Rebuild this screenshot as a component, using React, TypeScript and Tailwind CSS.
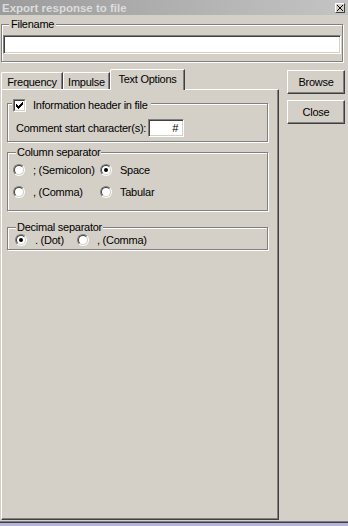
import React from 'react';

// Classic 3D radio button (12x12), sunken ring with white well.
const Radio: React.FC<{ checked?: boolean }> = ({ checked }) => (
  <span className="block w-[12px] h-[12px] shrink-0 rounded-full border border-t-[#808080] border-l-[#808080] border-r-white border-b-white">
    <span className="flex items-center justify-center w-full h-full rounded-full bg-white border border-t-[#404040] border-l-[#404040] border-r-[#d4d0c8] border-b-[#d4d0c8]">
      {checked && <span className="block w-[4px] h-[4px] rounded-full bg-black" />}
    </span>
  </span>
);

// Classic 3D checkbox (13x13) with a pixel check mark.
const CheckBox: React.FC<{ checked?: boolean }> = ({ checked }) => (
  <span className="flex w-[13px] h-[13px] shrink-0 border border-t-[#808080] border-l-[#808080] border-r-white border-b-white">
    <span className="flex flex-1 items-center justify-center bg-white border border-t-[#404040] border-l-[#404040] border-r-[#d4d0c8] border-b-[#d4d0c8]">
      {checked && (
        <svg width="7" height="7" viewBox="0 0 7 7" shapeRendering="crispEdges">
          {[2, 3, 4, 3, 2, 1, 0].map((y, x) => (
            <rect key={x} x={x} y={y} width="1" height="3" fill="#000" />
          ))}
        </svg>
      )}
    </span>
  </span>
);

const RadioOption: React.FC<{ label: string; checked?: boolean; className?: string }> = ({ label, checked, className }) => (
  <div className={`flex items-center ${className ?? ''}`}>
    <Radio checked={checked} />
    <span className="ml-[8px] whitespace-nowrap">{label}</span>
  </div>
);

const App: React.FC = () => {
  return (
    <div className="w-[348px] h-[526px] bg-[#d4d0c8] flex flex-col overflow-hidden text-black text-[11px] leading-[13px] tracking-[-0.25px] font-['Liberation_Sans',Arial,sans-serif]">
      {/* Title bar */}
      <div className="h-[15px] shrink-0 flex items-center justify-between bg-gradient-to-r from-[#9c9c9c] to-[#c4c4c4]">
        <span className="ml-[2px] pt-[1px] font-bold text-[11.5px] tracking-normal text-[#dcdcdc] whitespace-nowrap">Export response to file</span>
        <button className="mr-[3px] w-[10px] h-[10px] flex items-center justify-center bg-[#d4d0c8] border border-t-white border-l-white border-r-[#404040] border-b-[#404040]">
          <svg width="6" height="6" viewBox="0 0 6 6" shapeRendering="crispEdges">
            <path d="M0 0 L6 6 M6 0 L0 6" stroke="#000" strokeWidth="1.2" />
          </svg>
        </button>
      </div>

      <div className="flex-1 flex flex-col min-h-0">
        {/* Filename group */}
        <fieldset className="mt-[3px] ml-[1px] w-[342px] px-[1px] pt-[4px] pb-[7px] border border-[#808080] shadow-[inset_1px_1px_0_#fff,1px_1px_0_#fff]">
          <legend className="ml-[6px] px-[2px] bg-[#d4d0c8]">Filename</legend>
          <input className="block w-full h-[19px] bg-white border border-t-[#808080] border-l-[#808080] border-r-white border-b-white shadow-[inset_1px_1px_0_#404040,inset_-1px_-1px_0_#d4d0c8] outline-none" />
        </fieldset>

        <div className="flex-1 flex mt-[7px] pb-[1px] min-h-0">
          {/* Tab control */}
          <div className="ml-[1px] w-[278px] flex flex-col">
            <div className="h-[20px] flex items-start shrink-0">
              <div className="mt-[3px] h-[17px] w-[62px] flex items-center justify-center pt-[2px] border-t border-l border-r border-t-white border-l-white border-r-[#404040] rounded-tl-[2px] shadow-[inset_-1px_0_0_#808080]">Frequency</div>
              <div className="mt-[3px] h-[17px] w-[47px] flex items-center justify-center pt-[2px] border-t border-l border-r border-t-white border-l-white border-r-[#404040] rounded-tl-[2px] shadow-[inset_-1px_0_0_#808080]">Impulse</div>
              <div className="relative z-10 h-[21px] w-[75px] flex items-center justify-center pb-[1px] bg-[#d4d0c8] border-t border-l border-r border-t-white border-l-white border-r-[#404040] rounded-tl-[2px] shadow-[inset_-1px_0_0_#808080]">Text Options</div>
            </div>

            <div className="flex-1 flex flex-col border-t border-l border-r border-b border-t-white border-l-white border-r-[#404040] border-b-[#404040] shadow-[inset_-1px_-1px_0_#808080]">
              {/* Information header group */}
              <fieldset className="mt-[5px] ml-[5px] w-[261px] pt-[7px] pb-[4px] border border-[#808080] shadow-[inset_1px_1px_0_#fff,1px_1px_0_#fff]">
                <legend className="ml-[4px] px-[1px] pt-[4px] bg-[#d4d0c8]">
                  <span className="flex items-center">
                    <CheckBox checked />
                    <span className="ml-[7px] pr-[2px]">Information header in file</span>
                  </span>
                </legend>
                <div className="flex items-center h-[18px] pl-[8px]">
                  <span className="w-[132px] whitespace-nowrap">Comment start character(s):</span>
                  <div className="w-[36px] h-[18px] flex items-center justify-end pr-[5px] bg-white border border-t-[#808080] border-l-[#808080] border-r-white border-b-white shadow-[inset_1px_1px_0_#404040,inset_-1px_-1px_0_#d4d0c8]">#</div>
                </div>
              </fieldset>

              {/* Column separator group */}
              <fieldset className="mt-[4px] ml-[5px] w-[261px] pt-[3px] pb-[10px] pl-[5px] border border-[#808080] shadow-[inset_1px_1px_0_#fff,1px_1px_0_#fff]">
                <legend className="ml-[3px] px-[1px] bg-[#d4d0c8]">Column separator</legend>
                <div className="grid grid-cols-[87px_auto] gap-y-[6px]">
                  <RadioOption className="h-[16px]" label="; (Semicolon)" />
                  <RadioOption className="h-[16px]" label="Space" checked />
                  <RadioOption className="h-[16px]" label=", (Comma)" />
                  <RadioOption className="h-[16px]" label="Tabular" />
                </div>
              </fieldset>

              {/* Decimal separator group */}
              <fieldset className="mt-[10px] ml-[5px] w-[261px] pb-[3px] pl-[7px] border border-[#808080] shadow-[inset_1px_1px_0_#fff,1px_1px_0_#fff]">
                <legend className="ml-[1px] px-[1px] bg-[#d4d0c8]">Decimal separator</legend>
                <div className="flex h-[12px] items-center">
                  <RadioOption className="w-[62px]" label=". (Dot)" checked />
                  <RadioOption label=", (Comma)" />
                </div>
              </fieldset>
            </div>
          </div>

          {/* Buttons */}
          <div className="ml-[8px] mt-[1px] flex flex-col gap-[6px]">
            <button className="w-[58px] h-[24px] flex items-center justify-center border border-t-white border-l-white border-r-[#404040] border-b-[#404040] shadow-[inset_-1px_-1px_0_#808080]">Browse</button>
            <button className="w-[58px] h-[24px] flex items-center justify-center border border-t-white border-l-white border-r-[#404040] border-b-[#404040] shadow-[inset_-1px_-1px_0_#808080]">Close</button>
          </div>
        </div>
      </div>

      {/* Window bottom edge and what lies beneath */}
      <div className="h-[1px] shrink-0 bg-[#808080]" />
      <div className="h-[1px] shrink-0 bg-[#404040]" />
      <div className="h-[3px] shrink-0 bg-[#b4b4dc]" />
    </div>
  );
};

export default App;
